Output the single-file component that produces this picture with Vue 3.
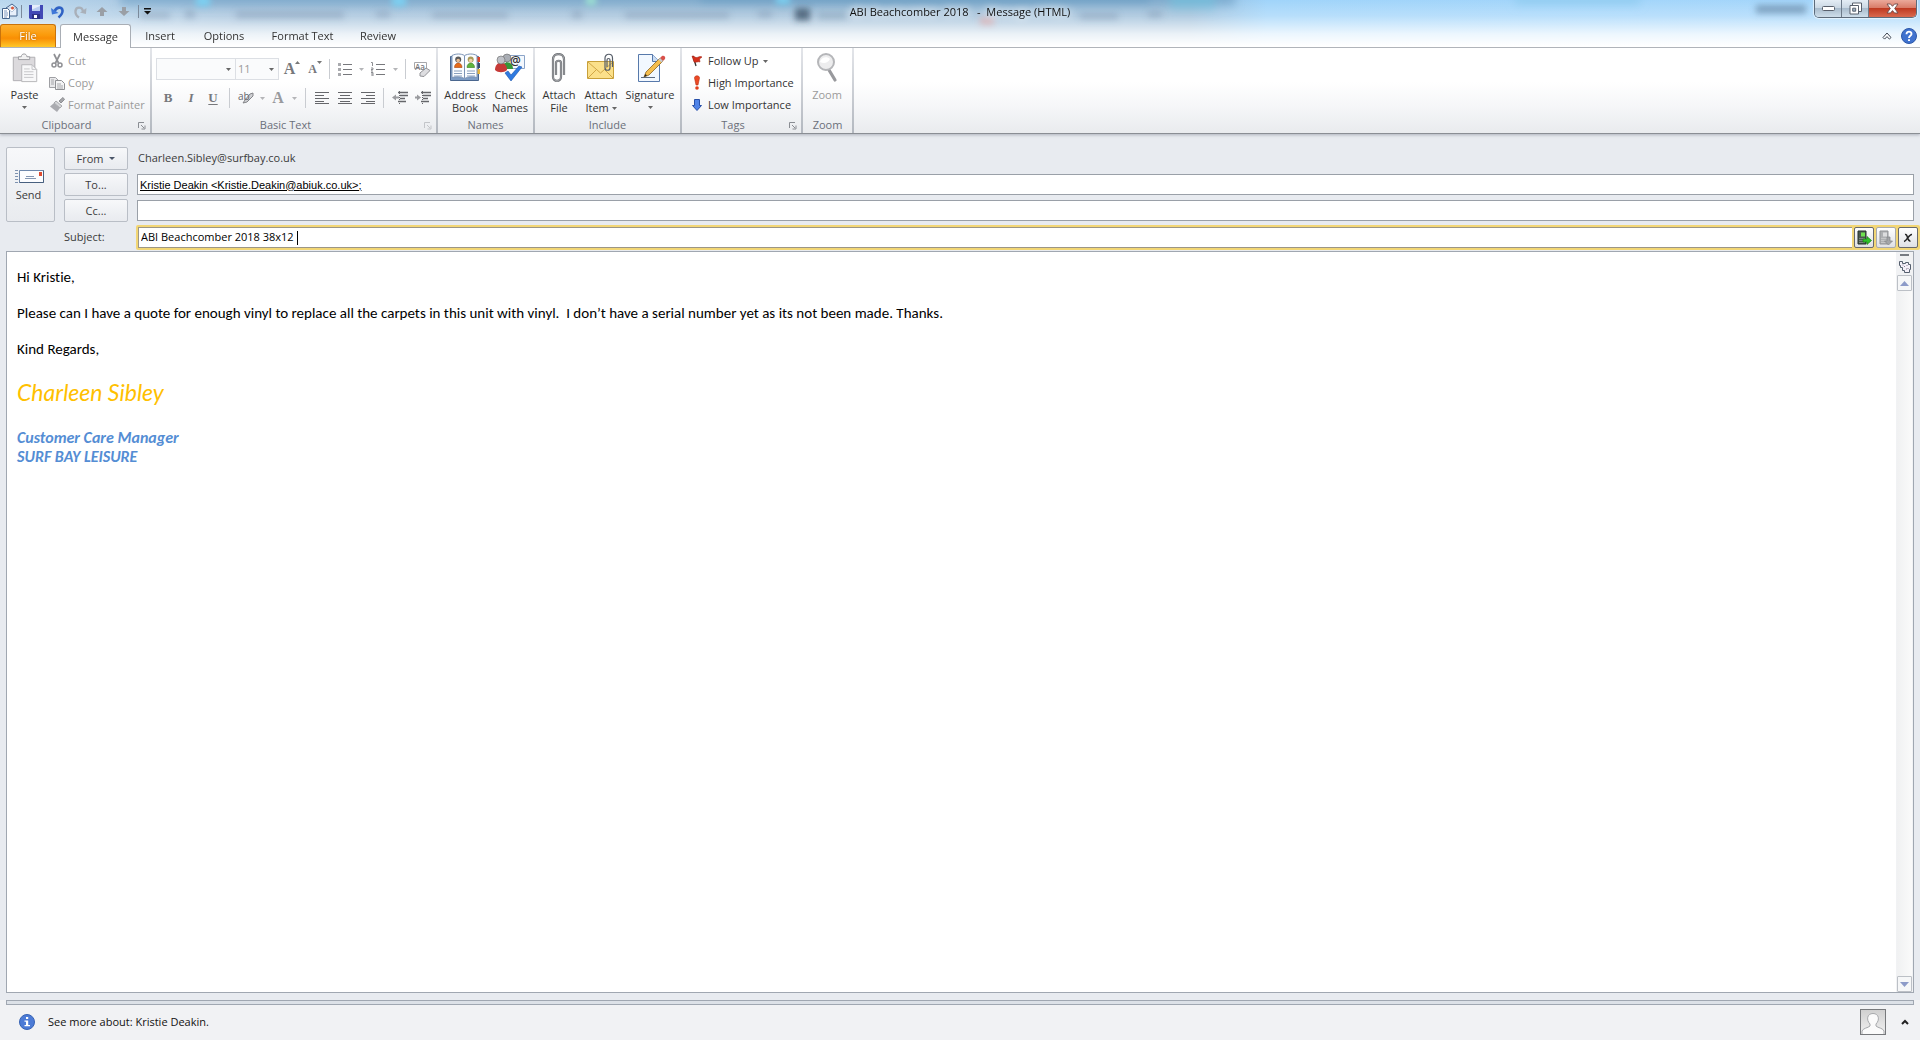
<script setup>
import { ref } from 'vue'

const to = ref('Kristie Deakin <Kristie.Deakin@abiuk.co.uk>;')
const cc = ref('')
const subject = ref('ABI Beachcomber 2018 38x12 ')

const tabs = [
  { name: 'Message', cls: 'message' },
  { name: 'Insert', cls: 'insert' },
  { name: 'Options', cls: 'options' },
  { name: 'Format Text', cls: 'format' },
  { name: 'Review', cls: 'review' },
]
</script>

<template>
  <div class="window">
    <header class="glass">
      <svg class="backdrop" viewBox="0 0 1920 47" preserveAspectRatio="none" aria-hidden="true">
        <defs>
          <filter id="soft" x="-20%" y="-80%" width="140%" height="260%"><feGaussianBlur stdDeviation="5" /></filter>
          <filter id="tight" x="-20%" y="-80%" width="140%" height="260%"><feGaussianBlur stdDeviation="3" /></filter>
        </defs>
        <g filter="url(#soft)">
          <path d="M120 -8H1235V4H120Z" fill="#6c9fc4" opacity=".75" />
          <path d="M700 -8H1150V3H700Z" fill="#5b93bb" opacity=".6" />
          <path d="M1170 -8H1215V8H1170Z" fill="#6fbfdc" opacity=".7" />
          <path d="M1515 -8H1640V3H1515Z" fill="#8ecbee" />
        </g>
        <g filter="url(#tight)">
          <path d="M196 -4h14v10h-14zM392 -4h14v10h-14zM776 -4h14v8h-14z" fill="#7cd0f2" />
          <path d="M586 -4h10v9h-10z" fill="#9ce2d2" />
          <path d="M140 12h30v6h-30zM185 10h10v8h-10zM236 11h108v7h-108zM376 11h14v6h-14zM432 12h76v6h-76zM572 11h10v7h-10zM625 12h104v6h-104zM758 11h14v6h-14zM1080 13h38v6h-38zM1148 11h14v6h-14z" fill="#7088a0" opacity=".35" />
          <path d="M795 8h15v12h-15z" fill="#30465b" opacity=".7" />
          <path d="M818 12h28v7h-28z" fill="#7793ab" opacity=".4" />
          <path d="M980 17h14v7h-14z" fill="#eaa3a0" opacity=".6" />
          <path d="M1756 5h50v8h-50z" fill="#5b7a98" opacity=".6" />
        </g>
      </svg>

      <div class="titlebar">
        <div class="quick">
          <svg width="17" height="17" viewBox="0 0 17 17">
            <path d="M5 5l6-4 5 4v8H5z" fill="#e8f1fb" stroke="#45648c" />
            <path d="M6 5h9l-4 4z" fill="#fff" stroke="#8aa4c4" stroke-width=".6" />
            <circle cx="11.500" cy="5" r="1.500" fill="#d9573a" />
            <path d="M1.500 5.500h5l2 2v8h-7z" fill="#fff" stroke="#45648c" />
            <path d="M3 8h3M3 10h4M3 12h4M3 14h3" stroke="#5b7fb0" stroke-width=".8" />
          </svg>
          <i class="bar"></i>
          <button aria-label="Save">
            <svg width="14" height="14" viewBox="0 0 14 14">
              <path d="M0 0h14v14H1l-1-1z" fill="#4148b5" />
              <path d="M3 0h8v6H3z" fill="#e6eefb" /><path d="M3 4.500L11 1v5H3z" fill="#b9cdf1" />
              <path d="M3 9h8v5H3z" fill="#2b3185" /><path d="M5 10h3v3H5z" fill="#fff" />
            </svg>
          </button>
          <button aria-label="Undo">
            <svg width="14" height="14" viewBox="0 0 14 14"><path d="M3.500 6.500C5 2 11 1 11.500 5.500c.3 3-1.500 5-4 7" fill="none" stroke="#2f62c4" stroke-width="2.600" /><path d="M0 3l1 6.500L7.500 8z" fill="#3f78d8" /></svg>
          </button>
          <button aria-label="Redo">
            <svg width="14" height="14" viewBox="0 0 14 14"><path d="M10 6C9 1.500 3 1.500 2.500 6c-.3 3 1 5 3.500 6.500" fill="none" stroke="#a9b0b9" stroke-width="2.400" /><path d="M13.500 3l-.6 6L7 7.500z" fill="#a9b0b9" /></svg>
          </button>
          <button aria-label="Previous item">
            <svg width="12" height="11" viewBox="0 0 12 11"><path d="M6 1l5.500 5H8v4H4V6H.5z" fill="#9a9fa6" /></svg>
          </button>
          <button aria-label="Next item">
            <svg width="12" height="11" viewBox="0 0 12 11"><path d="M6 10l5.500-5H8V1H4v4H.5z" fill="#9a9fa6" /></svg>
          </button>
          <i class="bar"></i>
          <button class="more" aria-label="Customize Quick Access Toolbar">
            <svg width="7" height="7" viewBox="0 0 7 7"><path d="M0 0h7v1.500H0zM0 3h7L3.500 6.500z" fill="#111" /></svg>
          </button>
        </div>
        <h1>ABI Beachcomber 2018 &nbsp; - &nbsp;Message (HTML)</h1>
        <div class="caption">
          <button aria-label="Minimize">
            <svg width="13" height="6" viewBox="0 0 13 6"><rect x=".5" y=".5" width="12" height="4" rx="1" fill="#fff" stroke="#59606c" /></svg>
          </button>
          <button aria-label="Restore">
            <svg width="13" height="13" viewBox="0 0 13 13"><path d="M3.500 1h9v8.500h-9z" fill="#fff" stroke="#59606c" /><path d="M1 3.500h8.500V12H1z" fill="#fff" stroke="#59606c" /><path d="M3.700 6.200h3v3h-3z" fill="#9fb4c8" stroke="#59606c" /></svg>
          </button>
          <button class="close" aria-label="Close">
            <svg width="13" height="11" viewBox="0 0 13 11"><path d="M1 1h3.500l2 2.300L8.500 1H12L8.700 5.500 12 10H8.500l-2-2.400L4.500 10H1l3.300-4.500z" fill="#fff" stroke="#6b4a4a" stroke-width=".9" /></svg>
          </button>
        </div>
      </div>

      <nav class="tabs">
        <button class="file">File</button>
        <button v-for="t in tabs" :key="t.name" class="tab" :class="t.cls">{{ t.name }}</button>
        <div class="help">
          <button aria-label="Minimize the Ribbon">
            <svg width="10" height="8" viewBox="0 0 10 8"><path d="M1 5.500L5 1l4 4.500-1.600 1.600L5 4.600 2.600 7.100z" fill="#fff" stroke="#3b4350" /></svg>
          </button>
          <button aria-label="Help">
            <svg width="16" height="16" viewBox="0 0 16 16"><circle cx="8" cy="8" r="7.500" fill="#3f72cf" stroke="#2c57a8" /><path d="M5.500 6.200C5.500 2.700 10.600 3 10.500 6 10.400 7.800 8 7.800 8 10" fill="none" stroke="#fff" stroke-width="1.900" /><path d="M7 11.200h2v1.900H7z" fill="#fff" /></svg>
          </button>
        </div>
      </nav>
    </header>

    <section class="ribbon">
      <div class="group clipboard">
        <div class="tools">
          <button class="big paste">
            <svg width="28" height="32" viewBox="0 0 28 32">
              <path d="M1.500 4.500h23v25h-23z" fill="#dcdadd" stroke="#aeacb0" />
              <path d="M7 7V4h3c0-4 6-4 6 0h3v3z" fill="#f2f2f2" stroke="#9b9b9f" />
              <path d="M10.500 12.500h11l5 5v13h-16z" fill="#f8f8f9" stroke="#b4b4b8" />
              <path d="M21.500 12.500v5h5M13 17h6M13 20h10M13 23h10M13 26h10" fill="none" stroke="#c4c4c8" />
            </svg>
            <span class="dark">Paste</span>
            <svg class="arr" width="5" height="3" viewBox="0 0 5 3"><path d="M0 0h5L2.500 3z" fill="#666" /></svg>
          </button>
          <div class="list off">
            <button>
              <svg width="16" height="16" viewBox="0 0 16 16"><path d="M5 1l4.500 9M11 1L6.500 10" stroke="#8f9094" stroke-width="1.700" /><circle cx="5" cy="12" r="2" fill="none" stroke="#8f9094" stroke-width="1.500" /><circle cx="11" cy="12" r="2" fill="none" stroke="#8f9094" stroke-width="1.500" /></svg>Cut
            </button>
            <button>
              <svg width="16" height="16" viewBox="0 0 16 16"><path d="M.5 2.500h6l3 3v7h-9z" fill="#e9e9eb" stroke="#9fa0a4" /><path d="M6.500 5.500h6l3 3v6h-9z" fill="#f4f4f5" stroke="#8f9094" /><path d="M2 5h3M2 7h3M2 9h3M8 9h4M8 11h6M8 13h6" stroke="#a5a6aa" /></svg>Copy
            </button>
            <button>
              <svg width="16" height="16" viewBox="0 0 16 16"><path d="M10 4l4-3.500 1.500 2L12 6z" fill="#a5a6aa" stroke="#8f9094" /><path d="M7 4l6 5-2 2-6-5z" fill="#d4d5d8" stroke="#8f9094" stroke-width=".7" /><path d="M5 6l6 5-3 4-7-5.500z" fill="#aaabb0" /></svg>Format Painter
            </button>
          </div>
        </div>
        <footer class="launches">Clipboard<svg class="launch" width="8" height="8" viewBox="0 0 8 8"><path d="M.5 6V.5H6M3 3l3 3M7 3.500V7H3.500" fill="none" stroke="#8a8d93" /></svg></footer>
      </div>

      <div class="group basic">
        <div class="tools rows off">
          <div class="row">
            <div class="combo font"><select aria-label="Font" disabled><option></option></select><svg width="5" height="3" viewBox="0 0 5 3"><path d="M0 0h5L2.500 3z" fill="#666" /></svg></div>
            <div class="combo size"><select aria-label="Font size" disabled><option>11</option></select><svg width="5" height="3" viewBox="0 0 5 3"><path d="M0 0h5L2.500 3z" fill="#666" /></svg></div>
            <button class="w26 serif grow" aria-label="Grow Font">A<svg width="5" height="3" viewBox="0 0 5 3"><path d="M0 3h5L2.500 0z" fill="#777" /></svg></button>
            <button class="w20 serif shrink" aria-label="Shrink Font">A<svg width="5" height="3" viewBox="0 0 5 3"><path d="M0 0h5L2.500 3z" fill="#777" /></svg></button>
            <i class="sep w8"></i>
            <button class="w24" aria-label="Bullets"><svg width="14" height="14" viewBox="0 0 14 14"><path d="M5 2.500h9M5 7.500h9M5 12.500h9" stroke="#77787c" /><path d="M0 1h3v3H0zM0 6h3v3H0zM0 11h3v3H0z" fill="#aaabaf" /></svg></button>
            <button class="w8" aria-label="Bullet styles"><svg width="5" height="3" viewBox="0 0 5 3"><path d="M0 0h5L2.500 3z" fill="#b4b5b8" /></svg></button>
            <button class="w26" aria-label="Numbering"><svg width="14" height="14" viewBox="0 0 14 14"><path d="M5 2.500h9M5 7.500h9M5 12.500h9" stroke="#77787c" /><path d="M0 .5h1.500V4M0 6h2v1.500H0V9h2M0 10.500h2V14H0M0 12h2" fill="none" stroke="#8d8e92" /></svg></button>
            <button class="w8" aria-label="Number styles"><svg width="5" height="3" viewBox="0 0 5 3"><path d="M0 0h5L2.500 3z" fill="#b4b5b8" /></svg></button>
            <i class="sep w12"></i>
            <button class="w22 clear" aria-label="Clear Formatting"><span>Aa</span><svg width="17" height="17" viewBox="0 0 17 17"><path d="M.5 1.500h12v6" fill="none" stroke="#a6a7ab" /><path d="M.5 1.500v6h5" fill="none" stroke="#a6a7ab" /><path d="M6 12l6-5 4 2.500-6 6-4-.5z" fill="#dedee1" stroke="#929397" /></svg></button>
          </div>
          <div class="row">
            <button class="w24 serif">B</button>
            <button class="w22 serif it">I</button>
            <button class="w22 serif un">U</button>
            <i class="sep w10"></i>
            <button class="w24 mark" aria-label="Text Highlight Color"><span>ab</span><svg width="16" height="14" viewBox="0 0 16 14"><path d="M7 9l5-6 3-1v3L9 11l-4 1z" fill="#cfd0d3" stroke="#85868a" /></svg></button>
            <button class="w8" aria-label="Highlight colors"><svg width="5" height="3" viewBox="0 0 5 3"><path d="M0 0h5L2.500 3z" fill="#b4b5b8" /></svg></button>
            <button class="w24 serif color">A</button>
            <button class="w8" aria-label="Font colors"><svg width="5" height="3" viewBox="0 0 5 3"><path d="M0 0h5L2.500 3z" fill="#b4b5b8" /></svg></button>
            <i class="sep w14"></i>
            <button class="w20" aria-label="Align Left"><svg width="14" height="12" viewBox="0 0 14 12"><path d="M0 .5h14M0 3.500h9M0 6.500h14M0 9.500h9M0 11.500h14" stroke="#66676b" /></svg></button>
            <button class="w26" aria-label="Center"><svg width="14" height="12" viewBox="0 0 14 12"><path d="M0 .5h14M2 3.500h10M0 6.500h14M2 9.500h10M0 11.500h14" stroke="#66676b" /></svg></button>
            <button class="w20" aria-label="Align Right"><svg width="14" height="12" viewBox="0 0 14 12"><path d="M0 .5h14M5 3.500h9M0 6.500h14M5 9.500h9M0 11.500h14" stroke="#66676b" /></svg></button>
            <i class="sep w10"></i>
            <button class="w24" aria-label="Decrease Indent"><svg width="16" height="14" viewBox="0 0 16 14"><path d="M6 1.500h10M8 4.500h8M8 7.500h5M6 10.500h8" stroke="#66676b" stroke-width="1.500" /><path d="M0 6.500l4-3v2h3v2H4v2z" fill="#9a9b9f" /><path d="M7.500 0v14" stroke="#66676b" stroke-dasharray="1 1" /></svg></button>
            <button class="w22" aria-label="Increase Indent"><svg width="16" height="14" viewBox="0 0 16 14"><path d="M6 1.500h10M8 4.500h8M8 7.500h5M6 10.500h8" stroke="#66676b" stroke-width="1.500" /><path d="M6 6.500l-4-3v2H0v2h2v2z" fill="#9a9b9f" /><path d="M7.500 0v14" stroke="#66676b" stroke-dasharray="1 1" /></svg></button>
          </div>
        </div>
        <footer class="launches">Basic Text<svg class="launch" width="8" height="8" viewBox="0 0 8 8"><path d="M.5 6V.5H6M3 3l3 3M7 3.500V7H3.500" fill="none" stroke="#c3c5c9" /></svg></footer>
      </div>

      <div class="group names">
        <div class="tools">
          <button class="big w48">
            <svg width="32" height="30" viewBox="0 0 32 30">
              <path d="M1.500 3.500h28v24h-28z" fill="#7d9cc4" stroke="#4a668e" />
              <path d="M28 4h3v5h-3z" fill="#d9442b" /><path d="M28 10h3v5h-3z" fill="#3b4d6e" /><path d="M28 16h3v5h-3z" fill="#e8b53c" />
              <path d="M3 2.500c4-2 9-2 12.500 0 4-2 8.500-2 12.500 0v22c-4-1-8.500-1-12.500 1-4-2-8.500-2-12.500-1z" fill="#fbfdff" stroke="#7b93b5" />
              <path d="M15.500 3v22" stroke="#7b93b5" />
              <path d="M5.500 14.500c0-6 7.500-6 7.500 0z" fill="#e66b18" stroke="#a5400c" stroke-width=".6" /><circle cx="9.200" cy="6.500" r="3" fill="#5a5a5a" /><circle cx="9.200" cy="7.500" r="1.800" fill="#e9bd94" />
              <path d="M18 14.500c0-6 7.500-6 7.500 0z" fill="#5fb43c" stroke="#377a1b" stroke-width=".6" /><circle cx="21.700" cy="6.500" r="3" fill="#a89a58" /><circle cx="21.700" cy="7.500" r="1.800" fill="#f2d3ad" />
              <path d="M5 18h8M5 20.500h8M5 23h8M18 18h8M18 20.500h8M18 23h8" stroke="#8aa0bd" />
            </svg>
            <span>Address</span><span>Book</span>
          </button>
          <button class="big w42 check">
            <svg width="32" height="30" viewBox="0 0 32 30">
              <path d="M12.500 2.500h18v13h-18z" fill="#f4f8fd" stroke="#8ba4c8" />
              <path d="M8 16c0-9 11-9 11 0z" fill="#35973a" /><circle cx="13" cy="5" r="4" fill="#a9adb4" stroke="#666" stroke-width=".6" />
              <path d="M1 17c0-10 12-10 12 0-3 3-9 3-12 0z" fill="#c63a37" /><circle cx="7" cy="7" r="4" fill="#bfc2c8" stroke="#666" stroke-width=".6" />
              <path d="M11 20l3-2 3 4L25 13l3 1-11 14z" fill="#2f7ae0" stroke="#1b55ad" stroke-width=".6" />
            </svg><b>@</b>
            <span>Check</span><span>Names</span>
          </button>
        </div>
        <footer>Names</footer>
      </div>

      <div class="group include">
        <div class="tools">
          <button class="big w42">
            <svg width="32" height="30" viewBox="0 0 32 30"><path d="M13 22V10c0-3 5-3 5 0v14c0 5-8 5-8 0V6.500c0-7.300 11-7.300 11 0V22" fill="none" stroke="#66696e" stroke-width="2.200" /><path d="M13 22V10c0-3 5-3 5 0v14c0 5-8 5-8 0V6.500c0-7.300 11-7.300 11 0V22" fill="none" stroke="#c5c7ca" stroke-width=".7" /></svg>
            <span>Attach</span><span>File</span>
          </button>
          <button class="big w42">
            <svg width="32" height="30" viewBox="0 0 32 30"><path d="M2.500 8.500h26v17h-26z" fill="#fbe08a" stroke="#c8a03a" /><path d="M3 25l9-9M28 25l-9-9M3 9l12.500 11L28 9" fill="none" stroke="#d0a646" /><path d="M22 14V7c0-2 3-2 3 0v8c0 3-5 3-5 0V5c0-5 7.500-5 7.500 0v9" fill="none" stroke="#555d68" stroke-width="1.200" /></svg>
            <span>Attach</span><span>Item <svg width="5" height="3" viewBox="0 0 5 3"><path d="M0 0h5L2.500 3z" fill="#666" /></svg></span>
          </button>
          <button class="big w56">
            <svg width="32" height="30" viewBox="0 0 32 30"><path d="M4.500 1.500h14l7 7v20h-21z" fill="#f2f8ff" stroke="#5779ab" /><path d="M18.500 1.500v7h7" fill="#c9dcf3" stroke="#5779ab" /><path d="M7 24.500h14" stroke="#5a6a80" /><path d="M10 24l2-5L26 5l3 3-14 14z" fill="#f5bd4c" stroke="#8b6420" stroke-width=".8" /><path d="M26 5l2-2c2-1 4 1 3 3l-2 2z" fill="#d8514b" /><path d="M24.500 6.500l3 3L29 8l-3-3z" fill="#c7cbd2" /><path d="M10 24l1.500-3 1.500 1.500z" fill="#222" /></svg>
            <span>Signature</span>
            <svg class="arr" width="5" height="3" viewBox="0 0 5 3"><path d="M0 0h5L2.500 3z" fill="#666" /></svg>
          </button>
        </div>
        <footer>Include</footer>
      </div>

      <div class="group tags">
        <div class="tools">
          <div class="list">
            <button><svg width="16" height="16" viewBox="0 0 16 16"><path d="M4 3l3 10" stroke="#333" stroke-width="1.300" /><path d="M3 3c3 0 3 2 5 1.500S11 3 13 4l-2.500 2L11 9C9 8 7 10 5 9z" fill="#d5301c" stroke="#9a1d10" stroke-width=".5" /></svg>Follow Up <svg class="down" width="5" height="3" viewBox="0 0 5 3"><path d="M0 0h5L2.500 3z" fill="#666" /></svg></button>
            <button><svg width="16" height="16" viewBox="0 0 16 16"><path d="M5.500 3c0-3 5-3 5 0L9 10H7z" fill="#ec4a25" stroke="#b93014" stroke-width=".6" /><circle cx="8" cy="13" r="1.800" fill="#e2401c" /></svg>High Importance</button>
            <button><svg width="16" height="16" viewBox="0 0 16 16"><path d="M5.500 2.500h5v6h2L8 13.500 3.500 8.500h2z" fill="#4f83e8" stroke="#2850a8" /></svg>Low Importance</button>
          </div>
        </div>
        <footer class="launches">Tags<svg class="launch" width="8" height="8" viewBox="0 0 8 8"><path d="M.5 6V.5H6M3 3l3 3M7 3.500V7H3.500" fill="none" stroke="#8a8d93" /></svg></footer>
      </div>

      <div class="group zoom">
        <div class="tools off">
          <button class="big w42">
            <svg width="32" height="30" viewBox="0 0 32 30"><path d="M18 17l6 10" stroke="#98999d" stroke-width="3.200" stroke-linecap="round" /><circle cx="15" cy="9" r="8" fill="#ededee" stroke="#b5b6b9" stroke-width="2" /><path d="M9 9c1-5 7-6 10-3-2 4-6 5-10 3z" fill="#fff" /></svg>
            <span>Zoom</span>
          </button>
        </div>
        <footer>Zoom</footer>
      </div>
    </section>

    <main class="mail">
      <div class="envelope">
        <button class="send">
          <svg width="29" height="15" viewBox="0 0 29 15"><path d="M4.500 1.500h24v12h-24z" fill="#fcfdff" stroke="#6e88ac" /><path d="M4.500 13.500h24v-12" fill="none" stroke="#48607f" /><path d="M0 1.500h3M0 4.500h3M0 7.500h3M0 10.500h3M0 13.500h3" stroke="#7d92b0" /><path d="M24 3h3v4h-3z" fill="#dd4b30" /><path d="M11 7.500h8M10 9.500h11" stroke="#8497b3" /></svg>
          <span>Send</span>
        </button>
        <div class="fields">
          <div class="line">
            <button class="pick">From <svg width="6" height="3" viewBox="0 0 6 3"><path d="M0 0h6L3 3z" fill="#4a5568" /></svg></button>
            <span class="sender">Charleen.Sibley@surfbay.co.uk</span>
          </div>
          <div class="line">
            <button class="pick">To...</button>
            <input v-model="to" class="box to" aria-label="To" />
          </div>
          <div class="line">
            <button class="pick">Cc...</button>
            <input v-model="cc" class="box" aria-label="Cc" />
          </div>
        </div>
      </div>

      <div class="line subject">
        <label for="subject">Subject:</label>
        <div class="active">
          <div class="entry"><input id="subject" v-model="subject" size="24" /><i class="caret"></i></div>
          <button aria-label="Send to phone">
            <svg width="16" height="16" viewBox="0 0 16 16"><path d="M2 1h8v13H2z" fill="#4b5850" stroke="#26302a" /><path d="M5 2.500h4v4H5z" fill="#6ee04e" /><path d="M3.500 8.500h5M3.500 10.500h5M3.500 12.500h5" stroke="#aab5ad" stroke-dasharray="1 1" /><path d="M7 9h4V6.500l4.500 4-4.500 4V12H7z" fill="#2fc229" stroke="#168012" stroke-width=".7" /></svg>
          </button>
          <button class="dim" aria-label="Receive from phone">
            <svg width="16" height="16" viewBox="0 0 16 16"><path d="M2 1h8v13H2z" fill="#aeb0b2" stroke="#919396" /><path d="M5 2.500h4v4H5z" fill="#dcddde" /><path d="M3.500 8.500h5M3.500 10.500h5M3.500 12.500h5" stroke="#ddd" stroke-dasharray="1 1" /><path d="M9 7h3v4h2.500L10.500 15 6.500 11H9z" fill="#a3a5a8" stroke="#838588" stroke-width=".7" /></svg>
          </button>
          <button class="x" aria-label="Close bar">
            <svg width="10" height="10" viewBox="0 0 10 10"><path d="M2 1.500c3-1 2 7.500 5.500 6.500M9 1.500C6 1 4 8 1 8.500" fill="none" stroke="#222" stroke-width="1.500" /></svg>
          </button>
        </div>
      </div>

      <div class="canvas">
        <article contenteditable="true" spellcheck="false" aria-label="Message body">
          <p>Hi Kristie,</p>
          <p>Please can I have a quote for enough vinyl to replace all the carpets in this unit with vinyl.&nbsp; I don’t have a serial number yet as its not been made. Thanks.</p>
          <p>Kind Regards,</p>
          <p class="signed">Charleen Sibley</p>
          <p class="role">Customer Care Manager<br />SURF BAY LEISURE</p>
        </article>
        <div class="scroll">
          <div class="split"></div>
          <button class="ruler" aria-label="Select browse object">
            <svg width="12" height="12" viewBox="0 0 12 12"><path d="M.5.500h3v2h3v-1h3v2h2v5h-1v3h-5v-2h-2v-3h-2v-2h-1z" fill="#f4f0f8" stroke="#56606f" /><path d="M4 3.500v1M5 5.500h1M8 4v1M7 8h1M9 7v1" stroke="#8d7f96" /></svg>
          </button>
          <button class="step" aria-label="Scroll up"><svg width="9" height="5" viewBox="0 0 9 5"><path d="M0 5h9L4.500 0z" fill="#8d9bc8" /></svg></button>
          <div class="track"></div>
          <button class="step" aria-label="Scroll down"><svg width="9" height="5" viewBox="0 0 9 5"><path d="M0 0h9L4.500 5z" fill="#8d9bc8" /></svg></button>
        </div>
      </div>
    </main>

    <footer class="people">
      <div class="splitter"></div>
      <div class="strip">
        <svg width="16" height="16" viewBox="0 0 16 16"><circle cx="8" cy="8" r="7.500" fill="#4c7bd6" stroke="#3763b4" /><path d="M7 3h2.200v2H7zM5.500 6.500h3.700V11H11v1.300H5.500V11H7V7.700H5.500z" fill="#fff" /></svg>
        <span>See more about: Kristie Deakin.</span>
        <svg class="face" width="26" height="26" viewBox="0 0 26 26">
          <defs><linearGradient id="face" x2="0" y2="1"><stop stop-color="#cfcfcf" /><stop offset="1" stop-color="#f2f2f2" /></linearGradient></defs>
          <rect x=".5" y=".5" width="25" height="25" fill="url(#face)" stroke="#77797c" />
          <path d="M2 25v-3c1-3 6-3 8-5v-2C6 11 7 4.500 13 4.500S20 11 16 15v2c2 2 7 2 8 5v3" fill="#fbfbfb" stroke="#a6a8ab" />
        </svg>
        <button aria-label="Expand people pane"><svg width="8" height="6" viewBox="0 0 8 6"><path d="M1 5l3-3 3 3" fill="none" stroke="#222" stroke-width="2" /></svg></button>
      </div>
    </footer>
  </div>
</template>

<style>
body { margin: 0; }
</style>

<style scoped>
* { box-sizing: border-box; }
.window { min-height: 100vh; display: flex; flex-direction: column; background: #e8ebf0; font: 11px/14px "Open Sans", "Noto Sans", sans-serif; color: #3b3b3b; }
button { font: inherit; color: inherit; background: none; border: 0; padding: 0; display: flex; align-items: center; justify-content: center; white-space: nowrap; flex: none; }
svg { flex: none; }

.glass { position: relative; overflow: hidden; background: linear-gradient(rgba(255,255,255,0) 0, rgba(255,255,255,.25) 16px, rgba(255,255,255,.8) 34px, #fff 46px), linear-gradient(90deg, #b9d7ee 0, #a1c0db 12%, #9abbd6 45%, #9abcd8 62%, #a0d4fa 66%, #a5d6fb 100%); }
.backdrop { position: absolute; inset: 0; width: 100%; height: 100%; }
.titlebar { position: relative; display: grid; grid-template-columns: 1fr auto 1fr; height: 24px; }
.quick { display: flex; align-items: center; padding-left: 1px; height: 23px; }
.quick button { width: 22px; height: 20px; }
.quick .bar { width: 1px; height: 13px; margin: 0 3px; background: #7b8a9b; }
.quick .more { width: 10px; }
h1 { margin: 0; font-size: 11px; line-height: 24px; font-weight: 400; color: #111; text-shadow: 0 0 8px #fff, 0 0 8px #fff; }
.caption { justify-self: end; display: flex; height: 18px; margin-right: 3px; border: 1px solid #5d6b7a; border-top: 0; border-radius: 0 0 5px 5px; overflow: hidden; box-shadow: 0 0 1px 1px rgba(255,255,255,.6); }
.caption button { width: 27px; border-right: 1px solid #6c7a89; background: linear-gradient(#e4edf5 0, #cbd8e4 45%, #a9bccd 50%, #cfdeea 100%); }
.caption .close { width: 47px; border: 0; background: linear-gradient(#eba99b 0, #d97c69 45%, #bf3a22 50%, #d9694f 100%); }

.tabs { position: relative; display: flex; height: 24px; border-bottom: 1px solid #b0b4ba; color: #333; }
.file { width: 56px; height: 23px; margin-right: 4px; color: #fff; border: 1px solid #c8730c; border-bottom: 0; border-radius: 3px 3px 0 0; background: linear-gradient(#fdb033 0, #fb9b0b 45%, #f98e04 60%, #ffc829 100%); text-shadow: 0 0 2px #a85c00; }
.tab { height: 23px; }
.message { width: 71px; height: 24px; margin-bottom: -1px; background: #fff; border: 1px solid #a9aeb5; border-bottom: 0; border-radius: 3px 3px 0 0; }
.insert { width: 58px; }
.options { width: 70px; }
.format { width: 87px; }
.review { width: 64px; }
.help { margin-left: auto; display: flex; align-items: center; gap: 9px; padding-right: 3px; }

.ribbon { display: flex; height: 86px; background: linear-gradient(#fff 0, #fff 40%, #f5f6f8 70%, #e9ebee 100%); border-bottom: 1px solid #8a8e94; box-shadow: 0 1px 3px rgba(60,70,90,.35); }
.group { display: flex; flex-direction: column; border-right: 2px solid #c5c9d0; border-image: linear-gradient(#e4e6ea, #b2b7bf) 1; }
.tools { flex: 1; display: flex; align-items: flex-start; }
.group > footer { position: relative; height: 17px; line-height: 18px; text-align: center; color: #6b6f7a; }
.group > .launches { padding-right: 17px; }
.launch { position: absolute; right: 4px; bottom: 3px; }
.clipboard { width: 152px; }
.basic { width: 286px; }
.names { width: 97px; }
.include { width: 147px; }
.tags { width: 121px; }
.zoom { width: 51px; }
.names .tools, .include .tools, .zoom .tools { padding-left: 3px; }
.big { position: relative; flex-direction: column; justify-content: flex-start; padding-top: 5px; line-height: 13px; color: #333; }
.big > svg:first-child { margin-bottom: 5px; height: 30px; }
.big.paste { width: 49px; }
.big .arr { margin-top: 5px; }
.big span svg { vertical-align: 2px; }
.off, .off .big { color: #9a9a9a; }
.off .dark, .paste .dark { color: #333; }
.check b { position: absolute; top: 7px; left: 21px; font-size: 12px; line-height: 12px; font-weight: 600; }
.list { display: flex; flex-direction: column; padding-top: 2px; }
.list button { height: 22px; gap: 3px; justify-content: flex-start; }
.tags .list { padding-left: 7px; color: #333; }
.down { margin-left: 1px; }

.rows { flex-direction: column; padding-left: 4px; padding-top: 9px; gap: 5px; }
.row { display: flex; align-items: center; height: 24px; }
.combo { position: relative; height: 22px; border: 1px solid #dcdfe4; background: #fafbfc; }
.combo.font { width: 80px; }
.combo.size { width: 43px; border-left: 0; }
.combo select { width: 100%; height: 20px; padding: 0 2px; appearance: none; border: 0; background: none; font: inherit; color: #9a9a9a; opacity: 1; }
.combo svg { position: absolute; right: 4px; top: 9px; }
.w8 { width: 8px; } .w10 { width: 10px; } .w12 { width: 12px; } .w14 { width: 14px; }
.w20 { width: 20px; } .w22 { width: 22px; } .w24 { width: 24px; } .w26 { width: 26px; }
.w42 { width: 42px; } .w48 { width: 48px; } .w56 { width: 56px; }
.sep { display: flex; justify-content: center; height: 20px; }
.sep::before { content: ""; width: 1px; background: #c9ccd1; }
.serif { font: 700 13px/20px "Liberation Serif", serif; color: #77787c; }
.it { font-style: italic; }
.un { text-decoration: underline; text-underline-offset: 2px; }
.grow { font-size: 16px; }
.shrink { font-size: 12px; }
.grow svg, .shrink svg { align-self: flex-start; margin-top: 2px; }
.color { font-size: 16px; color: #999a9e; }
.clear, .mark { position: relative; }
.clear span { position: absolute; left: 4px; top: 2px; font-size: 8px; line-height: 8px; font-weight: 600; color: #77787c; }
.mark span { position: absolute; left: 4px; top: 0; font-size: 10px; line-height: 10px; color: #66676b; }

.mail { flex: 1; display: flex; flex-direction: column; padding: 13px 6px 7px; }
.envelope { display: flex; gap: 9px; }
.send, .pick { border: 1px solid #b9bec6; border-radius: 2px; background: linear-gradient(#f7f8fa, #eef0f3 60%, #e9ebef); }
.send { width: 49px; height: 75px; flex-direction: column; gap: 4px; padding-top: 2px; }
.send svg { margin-left: -2px; }
.send span { margin-right: 4px; line-height: 14px; }
.fields { flex: 1; display: flex; flex-direction: column; gap: 3px; }
.line { display: flex; align-items: center; gap: 9px; height: 23px; }
.pick { width: 64px; height: 23px; gap: 6px; }
.sender { padding-left: 1px; line-height: 16px; padding-bottom: 2px; }
input { font: inherit; color: #111; padding: 0 2px; border: 0; outline: 0; background: #fff; }
.box { flex: 1; min-width: 0; height: 21px; border: 1px solid #9aa0a8; }
.box.to { font: 11px/14px "Liberation Sans", sans-serif; text-decoration: underline; color: #000; }
.subject { padding-left: 58px; margin: 3px -6px 0 0; gap: 0; height: 25px; }
.subject label { width: 72px; padding-bottom: 1px; }
.active { flex: 1; display: flex; gap: 2px; padding: 2px; background: #f2d675; height: 25px; border-radius: 2px; }
.entry { flex: 1; display: flex; align-items: center; height: 21px; border: 1px solid #9c9686; border-right: 0; background: #fff; }
.entry input { padding: 0 0 1px 2px; field-sizing: content; color: #000; }
.caret { width: 1px; height: 14px; background: #000; }
.active button { width: 20px; height: 21px; border: 1px solid #68696d; border-radius: 2px; background: linear-gradient(#fff, #dfe1e5); }
.active .dim { border-color: #a9abaf; }

.canvas { flex: 1; display: flex; margin-top: 1px; border: 1px solid #a0a7b1; background: #fff; }
article { flex: 1; padding: 16px 10px; font: 15px/18px Carlito, Calibri, Lato, sans-serif; color: #000; outline: 0; font-variant-ligatures: none; }
article p { margin: 0 0 18px; }
article .signed { margin: 0; font: italic 23px/32px Lato, cursive; color: #ffc000; }
article .role { margin-top: 20px; font-weight: 700; font-style: italic; font-size: 16px; line-height: 19px; color: #548dd4; }
.scroll { width: 17px; display: flex; flex-direction: column; align-items: center; background: #f1f2f4; }
.split { width: 9px; height: 2px; margin: 2px 0 3px; background: #777b82; }
.ruler { width: 17px; height: 16px; }
.step { width: 15px; height: 16px; border: 1px solid #bcc0c6; border-radius: 1px; background: #f6f7f8; }
.track { flex: 1; width: 15px; background: linear-gradient(90deg, #f0f1f2, #fafafa); }

.people { background: #f1f2f4; color: #111; }
.splitter { height: 5px; margin: 0 6px; border: 1px solid #a0a7b1; background: #dce1e7; }
.strip { display: flex; align-items: center; height: 35px; padding: 0 10px 2px 19px; gap: 13px; }
.strip .face { margin-left: auto; }
.strip button { width: 10px; height: 20px; margin-left: 1px; }
</style>
